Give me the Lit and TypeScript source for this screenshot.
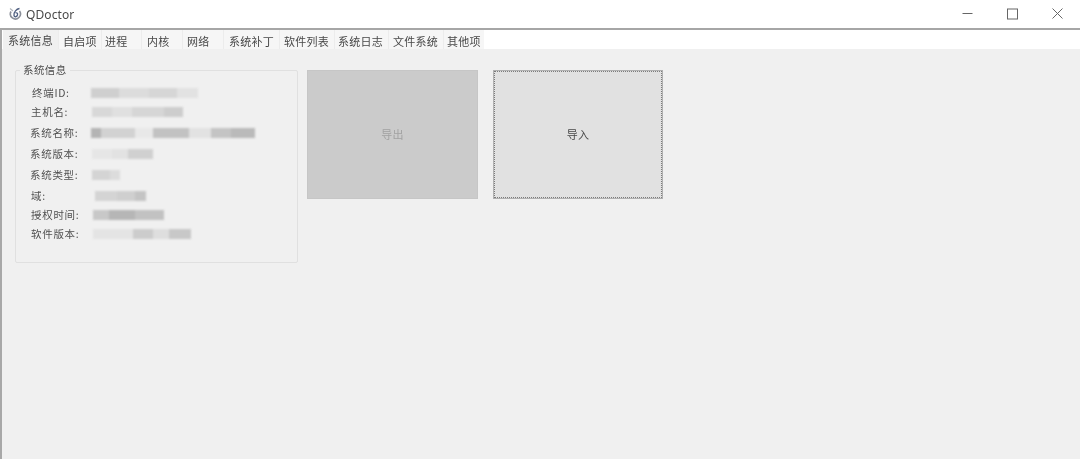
import { LitElement, html, css, svg } from "lit";
import { customElement } from "lit/decorators.js";

const TABS: [string, number, number][] = [
  ["系统信息", 55, 5], ["自启项", 43, 4], ["进程", 40, 3], ["内核", 41, 5], ["网络", 41, 4],
  ["系统补丁", 56, 5], ["软件列表", 55, 4], ["系统日志", 54, 3], ["文件系统", 55, 4], ["其他项", 41, 3],
];

type Seg = [number, string];
const ROWS: { label: string; h: number; indent: number; off: number; segs: Seg[] }[] = [
  { label: "终端ID:", h: 19, indent: 2, off: 0, segs: [[28, "#cfcfcf"], [30, "#dcdcdc"], [28, "#d6d6d6"], [21, "#e2e2e2"]] },
  { label: "主机名:", h: 20, indent: 1, off: 1, segs: [[20, "#d8d8d8"], [20, "#e0e0e0"], [32, "#d6d6d6"], [19, "#cdcdcd"]] },
  { label: "系统名称:", h: 21, indent: 0, off: 0, segs: [[10, "#b4b4b4"], [34, "#d2d2d2"], [18, "#e8e8e8"], [36, "#c2c2c2"], [22, "#e2e2e2"], [20, "#c4c4c4"], [24, "#bababa"]] },
  { label: "系统版本:", h: 21, indent: 0, off: 1, segs: [[20, "#e6e6e6"], [16, "#e2e2e2"], [25, "#d0d0d0"]] },
  { label: "系统类型:", h: 22, indent: 0, off: 1, segs: [[18, "#d4d4d4"], [10, "#dcdcdc"]] },
  { label: "域:", h: 19, indent: 1, off: 4, segs: [[22, "#d4d4d4"], [18, "#cfcfcf"], [11, "#c4c4c4"]] },
  { label: "授权时间:", h: 19, indent: 1, off: 2, segs: [[16, "#c8c8c8"], [26, "#b6b6b6"], [29, "#c2c2c2"]] },
  { label: "软件版本:", h: 19, indent: 1, off: 2, segs: [[40, "#e4e4e4"], [20, "#cccccc"], [16, "#dedede"], [22, "#c8c8c8"]] },
];

@customElement("app-root")
export class AppRoot extends LitElement {
  static styles = css`
    :host {
      display: block;
      width: 1080px;
      height: 459px;
      overflow: hidden;
      background: #f0f0f0;
      font-family: "Noto Sans CJK SC", "Noto Sans", sans-serif;
      color: #484848;
    }
    .window {
      display: flex;
      flex-direction: column;
      height: 459px;
      box-sizing: border-box;
      border-left: 2px solid #a8a8a8;
      filter: blur(0.3px);
    }
    .titlebar {
      flex: none;
      height: 28px;
      margin-left: -2px;
      background: #fff;
      display: flex;
      align-items: center;
      padding-left: 8px;
      border-bottom: 2px solid #a6a6a6;
    }
    .logo { width: 14px; height: 14px; margin-right: 4px; }
    .appname {
      font-family: "Noto Sans", sans-serif;
      font-size: 12px;
      color: #4a4a4a;
      flex: 1;
      letter-spacing: 0.1px;
    }
    .controls { display: flex; }
    .ctl { width: 45px; height: 28px; display: block; }
    .ctl svg { display: block; width: 45px; height: 28px; }
    .tabs {
      flex: none;
      height: 19px;
      display: flex;
      background: #fff;
      padding-left: 1px;
    }
    .tab {
      box-sizing: border-box;
      flex: none;
      height: 19px;
      background: #f6f6f6;
      border-left: 1px solid #ececec;
      font-size: 11px;
      letter-spacing: 0.25px;
      line-height: 22px;
      white-space: nowrap;
      overflow: hidden;
      color: #484848;
    }
    .tab.first {
      background: #f0f0f0;
      border-left: 0;
      line-height: 21px;
    }
    .content {
      flex: 1;
      display: flex;
      align-items: flex-start;
      padding: 21px 0 0 13px;
      background: #f0f0f0;
    }
    .group {
      position: relative;
      box-sizing: border-box;
      width: 283px;
      height: 193px;
      border: 1px solid #e0e0e0;
      border-radius: 2px;
      margin-right: 9px;
      padding: 12px 0 0 14px;
    }
    .legend {
      position: absolute;
      left: 4px;
      top: -8px;
      padding: 0 3px;
      background: #f0f0f0;
      font-size: 10.5px;
      letter-spacing: 0.4px;
      line-height: 14px;
      color: #4c4c4c;
    }
    .row { display: flex; align-items: center; }
    .lab-box {
      flex: none;
      width: 61px;
      box-sizing: border-box;
      font-size: 10.5px;
      letter-spacing: 0.7px;
      line-height: 14px;
      white-space: nowrap;
      color: #505050;
    }
    .value { display: flex; height: 10px; filter: blur(1px); }
    .seg { height: 100%; }
    .btn {
      box-sizing: border-box;
      width: 171px;
      height: 129px;
      display: flex;
      align-items: center;
      justify-content: center;
      font-size: 11px;
      letter-spacing: 0.3px;
      padding-bottom: 2px;
    }
    .btn.off {
      background: #cbcbcb;
      border: 1px solid #c6c6c6;
      color: #a2a2a2;
      margin-right: 15px;
    }
    .btn.on {
      background: #e1e1e1;
      border: 1px solid #b0b0b0;
      outline: 1px dotted #7c7c7c;
      outline-offset: -2px;
      color: #484848;
      width: 170px;
    }
  `;

  private logo() {
    return svg`<svg class="logo" viewBox="0 0 14 14" fill="none">
      <path d="M3 4.5 A5 5 0 1 0 11.5 4" stroke="#8a8f99" stroke-width="1.6"/>
      <path d="M11.5 1.5 C8.5 2 5.5 5 6 8.5 C6.4 10.5 9 10 9.5 8 C10 6 8.5 5.5 7.5 6" stroke="#4f5f80" stroke-width="1.3"/>
      <path d="M2 1.5 L5 4" stroke="#b0b4ba" stroke-width="1.2"/>
    </svg>`;
  }

  render() {
    return html`
      <div class="window">
        <div class="titlebar">
          ${this.logo()}
          <span class="appname">QDoctor</span>
          <div class="controls">
            <span class="ctl"><svg viewBox="0 0 45 28"><path d="M17.5 13.5H27.5" stroke="#666" stroke-width="1"/></svg></span>
            <span class="ctl"><svg viewBox="0 0 45 28"><rect x="17.5" y="9" width="10" height="10" fill="none" stroke="#666" stroke-width="1"/></svg></span>
            <span class="ctl"><svg viewBox="0 0 45 28"><path d="M17.5 8.5L27.5 18.5M27.5 8.5L17.5 18.5" stroke="#666" stroke-width="1"/></svg></span>
          </div>
        </div>
        <div class="tabs">
          ${TABS.map(([t, w, p], i) => html`<div class="tab ${i === 0 ? "first" : ""}" style="width:${w}px;padding-left:${p}px">${t}</div>`)}
        </div>
        <div class="content">
          <div class="group">
            <div class="legend">系统信息</div>
            ${ROWS.map(r => html`
              <div class="row" style="height:${r.h}px">
                <div class="lab-box" style="padding-left:${r.indent}px;width:${61 + r.off}px">${r.label}</div>
                <div class="value">${r.segs.map(([w, c]) => html`<div class="seg" style="width:${w}px;background:${c}"></div>`)}</div>
              </div>`)}
          </div>
          <div class="btn off">导出</div>
          <div class="btn on">导入</div>
        </div>
      </div>
    `;
  }
}
